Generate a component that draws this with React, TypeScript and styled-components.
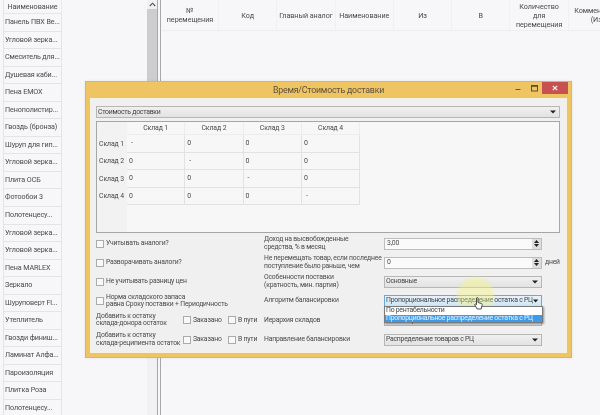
import styled, { createGlobalStyle } from "styled-components";

const GlobalStyle = createGlobalStyle`
  html, body {
    margin: 0;
    padding: 0;
    background: #f7f7f9;
  }
  body {
    font-family: Roboto, "Noto Sans", sans-serif;
    color: #4a4a4a;
    overflow: hidden;
  }
`;

const products = [
  "Панель ПВХ Ве...",
  "Угловой зерка...",
  "Смеситель для...",
  "Душевая каби...",
  "Пена EMOX",
  "Пенополистир...",
  "Гвоздь (бронза)",
  "Шуруп для гип...",
  "Угловой зерка...",
  "Плита ОСБ",
  "Фотообои 3",
  "Полотенцесу...",
  "Угловой зерка...",
  "Угловой зерка...",
  "Пена MARLEX",
  "Зеркало",
  "Шуруповерт Fl...",
  "Утеплитель",
  "Гвозди финиш...",
  "Ламинат Алфа...",
  "Пароизоляция",
  "Плитка Роза",
  "Полотенцесу...",
];

const columns = [
  ["№", "перемещения"],
  ["Код"],
  ["Главный аналог"],
  ["Наименование"],
  ["Из"],
  ["В"],
  ["Количество", "для", "перемещения"],
  ["Комментарий", "(Из)"],
];

const stores = ["Склад 1", "Склад 2", "Склад 3", "Склад 4"];

const Screen = styled.div`
  position: relative;
  width: 600px;
  height: 415px;
  overflow: hidden;
  display: flex;
  background: #f7f7f9;
  filter: blur(0.35px);
`;

const LeftPane = styled.div`
  width: 157px;
  flex-shrink: 0;
  display: flex;
  justify-content: space-between;
`;

const ListPanel = styled.div`
  width: 58px;
  margin-left: 3px;
  border-left: 1px solid #e4e4e6;
`;

const ListHeader = styled.div`
  height: 13px;
  font-size: 7.2px;
  line-height: 13px;
  text-align: center;
  letter-spacing: -0.05px;
  border-right: 1px solid #eaeaec;
  border-bottom: 1px solid #e6e6e8;
`;

const ListRow = styled.div`
  height: 16.55px;
  line-height: 16px;
  padding-left: 1px;
  font-size: 7.2px;
  letter-spacing: -0.12px;
  white-space: nowrap;
  overflow: hidden;
  border-right: 1px solid #e4e4e6;
  border-bottom: 1px solid #e4e4e6;
`;

const ScrollBar = styled.div`
  width: 10px;
  display: flex;
  flex-direction: column;
  background: #f1f1f3;
`;

const ScrollUp = styled.div`
  height: 9px;
  display: flex;
  align-items: center;
  justify-content: center;
`;

const ScrollThumb = styled.div`
  height: 260px;
  background: #cdcdcd;
`;

const DoubleRule = styled.div`
  width: 2px;
  margin-right: 1px;
  flex-shrink: 0;
  border-left: 1px solid #a8a8a8;
  border-right: 1px solid #a8a8a8;
`;

const TablePanel = styled.div`
  flex: 1;
  min-width: 0;
  overflow: hidden;
`;

const TableHead = styled.div`
  display: grid;
  grid-template-columns: 57px repeat(7, 58.3px);
  height: 30px;
  border-bottom: 1px solid #eeeef0;
`;

const HeadCell = styled.div`
  display: flex;
  flex-direction: column;
  align-items: center;
  justify-content: center;
  font-size: 7.2px;
  line-height: 9px;
  text-align: center;
  letter-spacing: -0.05px;
  white-space: nowrap;
  border-right: 1px solid #f0f0f2;
`;

const Dialog = styled.div`
  position: absolute;
  left: 85px;
  top: 81px;
  width: 487px;
  height: 277px;
  box-sizing: border-box;
  background: #efc564;
  border: 1px solid #e3b552;
  display: flex;
  flex-direction: column;
  box-shadow: 0 0 3px rgba(0, 0, 0, 0.08);
`;

const TitleBar = styled.div`
  height: 16px;
  flex-shrink: 0;
  position: relative;
  display: flex;
  align-items: center;
  justify-content: center;
  font-size: 8.8px;
  letter-spacing: -0.2px;
  color: #5b5142;
`;

const WindowControls = styled.div`
  position: absolute;
  right: 3px;
  top: 0;
  display: flex;
  align-items: flex-start;
`;

const ControlButton = styled.div<{ $close?: boolean }>`
  width: ${({ $close }) => ($close ? "26px" : "16px")};
  height: 12px;
  display: flex;
  align-items: center;
  justify-content: center;
  background: ${({ $close }) => ($close ? "#c75050" : "transparent")};
`;

const DialogBody = styled.div`
  flex: 1;
  margin: 0 4px 4px;
  background: #f0f0f0;
  padding: 7px 6px 0 5px;
  display: flex;
  flex-direction: column;
  border: 1px solid #f5f0e2;
  box-sizing: border-box;
`;

const ComboBox = styled.div<{ $active?: boolean }>`
  height: 12px;
  box-sizing: border-box;
  display: flex;
  align-items: center;
  justify-content: space-between;
  padding: 0 3px 0 1px;
  font-size: 6.9px;
  letter-spacing: -0.27px;
  white-space: nowrap;
  color: #444;
  border: 1px solid ${({ $active }) => ($active ? "#6aa9dc" : "#b6b6b6")};
  background: ${({ $active }) =>
    $active ? "linear-gradient(#e6f2fb, #cfe6f7)" : "linear-gradient(#f0f0f0, #e2e2e2)"};
`;

const Arrow = () => (
  <svg width="6" height="4" viewBox="0 0 6 4">
    <path d="M0 0.4H6L3 3.6Z" fill="#222" />
  </svg>
);

const MatrixBox = styled.div`
  margin-top: 3px;
  height: 112px;
  box-sizing: border-box;
  border: 1px solid #a6a6a6;
  background: linear-gradient(90deg, #f2f2f3 30px, #f7f7f8 30px);
  flex-shrink: 0;
`;

const Matrix = styled.div`
  display: grid;
  grid-template-columns: 30px repeat(4, 58.3px);
  grid-template-rows: 13px repeat(4, 17.5px);
  width: fit-content;
`;

const MatrixHead = styled.div`
  font-size: 6.9px;
  letter-spacing: -0.1px;
  display: flex;
  align-items: center;
  justify-content: center;
  border-right: 1px solid #ededee;
  border-bottom: 1px solid #ededee;
`;

const MatrixSide = styled.div`
  font-size: 6.9px;
  letter-spacing: -0.1px;
  display: flex;
  align-items: center;
  padding-left: 2px;
  white-space: nowrap;
`;

const MatrixCell = styled.div<{ $dash?: boolean }>`
  font-size: 7px;
  display: flex;
  align-items: center;
  padding-left: ${({ $dash }) => ($dash ? "4px" : "2px")};
  border-right: 1px solid #e2e2e3;
  border-bottom: 1px solid #e2e2e3;
`;

const FormGrid = styled.div`
  margin-top: 1px;
  display: grid;
  grid-template-columns: 168px 120px 158px auto;
  grid-auto-rows: 19.2px;
  font-size: 6.8px;
  letter-spacing: -0.18px;
  line-height: 7.6px;
`;

const CheckRow = styled.div`
  display: flex;
  align-items: center;
  gap: 2px;
  white-space: nowrap;
`;

const CheckBox = styled.span`
  width: 8px;
  height: 8px;
  box-sizing: border-box;
  flex-shrink: 0;
  border: 1px solid #ababab;
  background: #f8f8f8;
`;

const RemainderRow = styled.div`
  display: grid;
  grid-template-columns: 87px 45px auto;
  align-items: center;
  white-space: nowrap;
`;

const FieldLabel = styled.div`
  align-self: center;
  white-space: nowrap;
`;

const ControlCell = styled.div`
  align-self: center;
`;

const SpinBox = styled.div`
  height: 12px;
  box-sizing: border-box;
  display: flex;
  align-items: center;
  justify-content: space-between;
  padding-left: 2px;
  font-size: 6.9px;
  background: #fafafa;
  border: 1px solid #bdbdbd;
`;

const SpinButtons = styled.div`
  width: 9px;
  height: 10px;
  background: #dedede;
  display: flex;
  flex-direction: column;
  align-items: center;
  justify-content: space-evenly;
`;

const Suffix = styled.div`
  align-self: center;
  padding-left: 3px;
`;

const DropList = styled.div`
  position: absolute;
  left: 384px;
  top: 306px;
  width: 159px;
  box-sizing: border-box;
  font-size: 6.9px;
  letter-spacing: -0.27px;
  color: #444;
  background: #fff;
  border: 1px solid #7a7a7a;
  box-shadow: 1px 1px 2px rgba(0, 0, 0, 0.4);
  white-space: nowrap;
`;

const DropItem = styled.div<{ $selected?: boolean }>`
  height: 7.5px;
  line-height: 7.5px;
  padding-left: 1px;
  background: ${({ $selected }) => ($selected ? "#3d9be9" : "transparent")};
  color: ${({ $selected }) => ($selected ? "#e6f3ff" : "#444")};
`;

const Highlight = styled.div`
  position: absolute;
  left: 457px;
  top: 277px;
  width: 37px;
  height: 37px;
  border-radius: 50%;
  background: rgba(246, 244, 120, 0.4);
  filter: blur(1px);
`;

const Cursor = styled.svg`
  position: absolute;
  left: 474px;
  top: 297px;
`;

const SpinArrows = () => (
  <SpinButtons>
    <svg width="5" height="3" viewBox="0 0 5 3">
      <path d="M0 3L2.5 0L5 3Z" fill="#222" />
    </svg>
    <svg width="5" height="3" viewBox="0 0 5 3">
      <path d="M0 0H5L2.5 3Z" fill="#222" />
    </svg>
  </SpinButtons>
);

const App = () => {
  return (
    <Screen>
      <GlobalStyle />
      <LeftPane>
        <ListPanel>
          <ListHeader>Наименование</ListHeader>
          {products.map((name, i) => (
            <ListRow key={i}>{name}</ListRow>
          ))}
        </ListPanel>
        <ScrollBar>
          <ScrollUp>
            <svg width="7" height="5" viewBox="0 0 7 5">
              <path d="M0.8 4L3.5 1.2L6.2 4" fill="none" stroke="#555" strokeWidth="1.1" />
            </svg>
          </ScrollUp>
          <ScrollThumb />
        </ScrollBar>
      </LeftPane>
      <DoubleRule />
      <TablePanel>
        <TableHead>
          {columns.map((lines, i) => (
            <HeadCell key={i}>
              {lines.map((line) => (
                <span key={line}>{line}</span>
              ))}
            </HeadCell>
          ))}
        </TableHead>
      </TablePanel>

      <Dialog>
        <TitleBar>
          Время/Стоимость доставки
          <WindowControls>
            <ControlButton>
              <svg width="6" height="6" viewBox="0 0 6 6">
                <path d="M0.5 4.5H5.5" stroke="#6b5a33" strokeWidth="1" />
              </svg>
            </ControlButton>
            <ControlButton>
              <svg width="7" height="7" viewBox="0 0 7 7">
                <rect x="0.5" y="0.5" width="6" height="5.5" fill="none" stroke="#5c4d2c" strokeWidth="1" />
                <path d="M0.5 1.3H6.5" stroke="#5c4d2c" strokeWidth="1" />
              </svg>
            </ControlButton>
            <ControlButton $close>
              <svg width="6" height="6" viewBox="0 0 6 6">
                <path d="M0.8 0.8L5.2 5.2M5.2 0.8L0.8 5.2" stroke="#fff" strokeWidth="1.1" />
              </svg>
            </ControlButton>
          </WindowControls>
        </TitleBar>
        <DialogBody>
          <ComboBox>
            Стоимость доставки
            <Arrow />
          </ComboBox>
          <MatrixBox>
            <Matrix>
              <MatrixSide />
              {stores.map((s) => (
                <MatrixHead key={s}>{s}</MatrixHead>
              ))}
              {stores.map((s, r) => [
                <MatrixSide key={s}>{s}</MatrixSide>,
                ...stores.map((c, col) => (
                  <MatrixCell key={s + c} $dash={col === r}>
                    {col === r ? "-" : "0"}
                  </MatrixCell>
                )),
              ])}
            </Matrix>
          </MatrixBox>
          <FormGrid>
            <CheckRow>
              <CheckBox />
              Учитывать аналоги?
            </CheckRow>
            <FieldLabel>
              Доход на высвобожденные
              <br />
              средства, % в месяц
            </FieldLabel>
            <ControlCell>
              <SpinBox>
                3,00
                <SpinArrows />
              </SpinBox>
            </ControlCell>
            <div />

            <CheckRow>
              <CheckBox />
              Разворачивать аналоги?
            </CheckRow>
            <FieldLabel>
              Не перемещать товар, если последнее
              <br />
              поступление было раньше, чем
            </FieldLabel>
            <ControlCell>
              <SpinBox>
                0
                <SpinArrows />
              </SpinBox>
            </ControlCell>
            <Suffix>дней</Suffix>

            <CheckRow>
              <CheckBox />
              Не учитывать разницу цен
            </CheckRow>
            <FieldLabel>
              Особенности поставки
              <br />
              (кратность, мин. партия)
            </FieldLabel>
            <ControlCell>
              <ComboBox>
                Основные
                <Arrow />
              </ComboBox>
            </ControlCell>
            <div />

            <CheckRow>
              <CheckBox />
              <span>
                Норма складского запаса
                <br />
                равна Сроку поставки + Периодичность
              </span>
            </CheckRow>
            <FieldLabel>Алгоритм балансировки</FieldLabel>
            <ControlCell>
              <ComboBox $active>
                Пропорциональное распределение остатка с РЦ
                <Arrow />
              </ComboBox>
            </ControlCell>
            <div />

            <RemainderRow>
              <span>
                Добавить к остатку
                <br />
                склада-донора остаток
              </span>
              <CheckRow>
                <CheckBox />
                Заказано
              </CheckRow>
              <CheckRow>
                <CheckBox />В пути
              </CheckRow>
            </RemainderRow>
            <FieldLabel>Иерархия складов</FieldLabel>
            <ControlCell>
              <ComboBox>
                Балансировка
                <Arrow />
              </ComboBox>
            </ControlCell>
            <div />

            <RemainderRow>
              <span>
                Добавить к остатку
                <br />
                склада-реципиента остаток
              </span>
              <CheckRow>
                <CheckBox />
                Заказано
              </CheckRow>
              <CheckRow>
                <CheckBox />В пути
              </CheckRow>
            </RemainderRow>
            <FieldLabel>Направление балансировки</FieldLabel>
            <ControlCell>
              <ComboBox>
                Распределение товаров с РЦ
                <Arrow />
              </ComboBox>
            </ControlCell>
            <div />
          </FormGrid>
        </DialogBody>
      </Dialog>

      <Highlight />
      <DropList>
        <DropItem>По рентабельности</DropItem>
        <DropItem $selected>Пропорциональное распределение остатка с РЦ</DropItem>
      </DropList>
      <Cursor width="9" height="13" viewBox="0 0 9 13">
        <path
          d="M2.5 1.2C2.5 0.4 4 0.4 4 1.2V5.5L7.5 6.5C8.2 6.8 8.2 7.5 8 8.5L7.2 12H3.2L0.8 8C0.4 7.2 1.2 6.6 2.5 7.6Z"
          fill="#fff"
          stroke="#222"
          strokeWidth="0.8"
        />
      </Cursor>
    </Screen>
  );
};

export default App;
